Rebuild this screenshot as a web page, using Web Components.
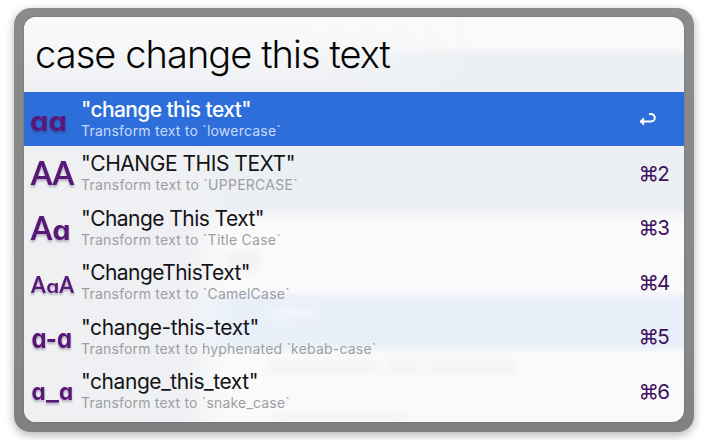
<!DOCTYPE html>
<html lang="en"><head><meta charset="utf-8"><title>Case change</title>
<style>body{margin:0;width:708px;height:440px;overflow:hidden;background:#fff;font-family:Inter,"Liberation Sans",sans-serif}</style>
</head><body>
<launcher-window>
<search-field slot="query" text="case change this text"></search-field>
<result-row selected icon="aa" heading='"change this text"' tw="170" detail="Transform text to `lowercase`" dw="200"></result-row>
<result-row icon="AA" heading='"CHANGE THIS TEXT"' tw="214" detail="Transform text to `UPPERCASE`" dw="217" key="2"></result-row>
<result-row icon="Aa" heading='"Change This Text"' tw="183" detail="Transform text to `Title Case`" dw="200" key="3"></result-row>
<result-row icon="AaA" heading='"ChangeThisText"' tw="169" detail="Transform text to `CamelCase`" dw="209" key="4"></result-row>
<result-row icon="a-a" heading='"change-this-text"' tw="178" detail="Transform text to hyphenated `kebab-case`" dw="295.5" key="5"></result-row>
<result-row icon="a_a" heading='"change_this_text"' tw="177" detail="Transform text to `snake_case`" dw="209" key="6"></result-row>
</launcher-window>
<script>
class FitText extends HTMLElement{
  connectedCallback(){
    const r=this.attachShadow({mode:'open'});
    r.innerHTML='<style>:host{display:block;white-space:pre}span{display:inline-block}</style><span></span>';
    const s=r.querySelector('span');s.textContent=this.getAttribute('text');
    const w=+this.getAttribute('width'),n=s.textContent.length;
    s.style.letterSpacing=(w-s.getBoundingClientRect().width)/n+'px';
  }
}
class LauncherWindow extends HTMLElement{
  connectedCallback(){
    this.attachShadow({mode:'open'}).innerHTML=`<style>
:host{display:block;box-sizing:border-box;width:680px;height:423.5px;margin:8px 0 0 14px;padding:9px 10px 10px;background:linear-gradient(#8b8b8b,#878787 80%,#808080);border-radius:17px 17px 16px 16px;box-shadow:0 3px 10px rgba(0,0,0,.3)}
.panel{position:relative;height:404.5px;border-radius:12px;overflow:hidden;background:#fafafb;box-shadow:0 0 2px #666}
.content{position:relative}
svg{position:absolute;inset:0}
</style><div class="panel"><svg width="660" height="405">
<defs><filter id="b" x="-20%" y="-20%" width="140%" height="140%"><feGaussianBlur stdDeviation="3"/></filter><filter id="s" x="-20%" y="-100%" width="140%" height="300%"><feGaussianBlur stdDeviation="4"/></filter>
<linearGradient id="h" x2="0" y2="1"><stop stop-color="#fafafb"/><stop offset=".45" stop-color="#f5f6f8"/><stop offset="1" stop-color="#edeff2"/></linearGradient>
<linearGradient id="m" x2="1"><stop offset=".6" stop-color="#fff"/><stop offset="1" stop-color="#fff" stop-opacity="0"/></linearGradient>
<mask id="k"><rect width="460" height="76" fill="url(#m)"/></mask>
<linearGradient id="e" x2="1"><stop stop-color="#e8eff8" stop-opacity="0"/><stop offset=".09" stop-color="#e9f0f9"/><stop offset="1" stop-color="#e8eff8"/></linearGradient>
<linearGradient id="l" x2="1"><stop stop-color="#eef0f2"/><stop offset=".8" stop-color="#eff0f3"/><stop offset="1" stop-color="#f0f1f4" stop-opacity="0"/></linearGradient></defs>
<rect x="-20" y="34" width="700" height="164" fill="#edf0f3" filter="url(#b)"/>
<rect width="460" height="76" fill="url(#h)" mask="url(#k)"/>
<rect x="0" y="130" width="200" height="275" fill="url(#l)"/>
<rect x="160" y="278" width="521" height="54" fill="url(#e)" filter="url(#b)"/>
<g fill="#d9dcdf" opacity=".24" filter="url(#s)"><rect x="243" y="344" width="108" height="11"/><rect x="362" y="344" width="35" height="11"/><rect x="405" y="344" width="87" height="11"/><rect x="247" y="396" width="137" height="8"/><rect x="202" y="235" width="34" height="20"/></g>
<g fill="#fff" opacity=".4" filter="url(#s)"><rect x="247" y="291" width="46" height="10"/></g>
</svg><div class="content"><slot name="query"></slot><slot></slot></div></div>`;
  }
}
class SearchField extends HTMLElement{
  connectedCallback(){
    this.attachShadow({mode:'open'}).innerHTML=`<style>
:host{display:block;box-sizing:border-box;height:74.5px;padding:13px 0 0 11px;color:#050505;font-size:38px;line-height:48px;font-weight:350}
</style><fit-text text="${this.getAttribute('text')}" width="355"></fit-text>`;
  }
}
// Each run: text, font family, size, weight, x, baseline, advance width
const icons={
 aa:[['aa','Inter',27,700,6,39.3,37]],
 AA:[['AA','Lato',33,700,6.8,39.3,43.5]],
 Aa:[['A','Lato',33,700,6.8,39.3,21.6],['a','Inter',26.5,650,28.6,39.3,18]],
 AaA:[['A','Lato',22,700,7,38.4,14.8],['a','Inter',18,620,22.2,38.4,13],['A','Lato',22,700,35.2,38.4,14.8]],
 'a-a':[['a-a','Inter',26,700,7.5,38.3,40.5]],
 a_a:[['a','Inter',23,700,7.6,36,14.2],['_','Inter',23,700,21.9,36,13],['a','Inter',23,700,35,36,14.2]]};
class CaseIcon extends HTMLElement{
  connectedCallback(){
    const runs=icons[this.getAttribute('name')];
    this.attachShadow({mode:'open'}).innerHTML=`<style>:host{display:block;width:57px;height:54.5px}svg{display:block;overflow:visible;filter:drop-shadow(0 2px 1px rgba(30,20,60,.3))}text{font-feature-settings:"cv11"}</style>
<svg width="57" height="54">${runs.map(([t,f,fs,wt,x,y,w])=>`<text x="${x}" y="${y}" font-family="${f},sans-serif" font-size="${fs}" font-weight="${wt}" fill="#591778" textLength="${w}" lengthAdjust="spacingAndGlyphs">${t}</text>`).join('')}</svg>`;
  }
}
class ResultRow extends HTMLElement{
  connectedCallback(){
    const g=k=>(this.getAttribute(k)||'').replace(/"/g,'&quot;');
    this.attachShadow({mode:'open'}).innerHTML=`<style>
:host{display:grid;grid-template-columns:57px 1fr 45.5px;height:54.5px;color:#141416}
:host([selected]){background:#2e6edb;color:#fff}
.t{font-size:21px;line-height:26px;margin-top:5px}
.d{font-size:14px;line-height:18px;margin-top:-1px;color:#9d9ea2}
:host([selected]) .t{font-weight:500}
:host([selected]) .d{color:#c6dafa}
.k{font-size:20.5px;line-height:26px;margin-top:14.5px;color:#3d1260;font-weight:430}
svg{display:block;margin:7px 0 0 .5px}
</style><case-icon name="${g('icon')}"></case-icon><div><fit-text class="t" text="${g('heading')}" width="${g('tw')}"></fit-text><fit-text class="d" text="${g('detail')}" width="${g('dw')}"></fit-text></div>
<div class="k">${this.hasAttribute('selected')?'<svg width="18" height="14" fill="none" stroke="#fff" stroke-width="2" stroke-linecap="round" stroke-linejoin="round"><path d="M10.8 1.1h1.3a3.6 3.6 0 0 1 0 7.4H2"/><path d="M4.4 5.2 1 8.5l3.4 3.2Z" fill="#fff" stroke-width="1"/></svg>':`<fit-text text="⌘${g('key')}" width="29.5"></fit-text>`}</div>`;
  }
}
customElements.define('fit-text',FitText);
customElements.define('launcher-window',LauncherWindow);
customElements.define('search-field',SearchField);
customElements.define('case-icon',CaseIcon);
customElements.define('result-row',ResultRow);
</script></body></html>
